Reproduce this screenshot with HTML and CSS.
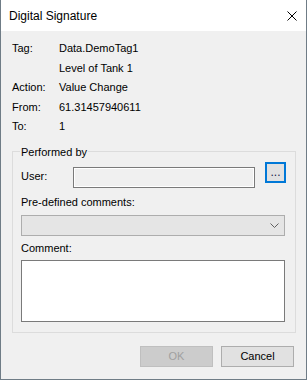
FILE: index.html
```html
<!DOCTYPE html>
<html lang="en">
<head>
  <meta charset="UTF-8">
  <title>Digital Signature</title>
  <link rel="stylesheet" href="styles.css">
</head>
<body>
  <div class="window">
    <div class="titlebar">
      <span class="title">Digital Signature</span>
      <svg class="close" width="10" height="10" viewBox="0 0 10 10">
        <path d="M0.5 0.5 L9.5 9.5 M9.5 0.5 L0.5 9.5" stroke="#000" stroke-width="1" fill="none"/>
      </svg>
    </div>

    <div class="content">
      <!-- Informações da tag -->
      <div class="info">
        <span>Tag:</span><span>Data.DemoTag1</span>
        <span></span><span>Level of Tank 1</span>
        <span>Action:</span><span>Value Change</span>
        <span>From:</span><span>61.31457940611</span>
        <span>To:</span><span>1</span>
      </div>

      <fieldset class="group">
        <legend>Performed by</legend>
        <div class="user-row">
          <label class="user-label">User:</label>
          <div class="textbox"></div>
          <button class="browse">...</button>
        </div>
        <div class="field-label">Pre-defined comments:</div>
        <div class="combo">
          <svg class="chevron" width="9" height="5" viewBox="0 0 9 5">
            <path d="M0.5 0.5 L4.5 4.5 L8.5 0.5" stroke="#606060" stroke-width="1" fill="none"/>
          </svg>
        </div>
        <div class="field-label comment-label">Comment:</div>
        <div class="memo"></div>
      </fieldset>

      <div class="buttons">
        <button class="btn" disabled>OK</button>
        <button class="btn">Cancel</button>
      </div>
    </div>
  </div>
</body>
</html>
```

FILE: styles.css
```css
* {
  box-sizing: border-box;
}

html, body {
  margin: 0;
  padding: 0;
}

body {
  width: 307px;
  height: 380px;
  overflow: hidden;
  font-family: "Liberation Sans", Arial, sans-serif;
  font-size: 11px;
  color: #000;
}

.window {
  height: 380px;
  display: flex;
  flex-direction: column;
  background-color: #f0f0f0;
  border: 1px solid #6f7c86;
  border-top: none;
}

.titlebar {
  height: 31px;
  flex: none;
  display: flex;
  align-items: center;
  justify-content: space-between;
  padding-left: 8px;
  background-color: #ffffff;
  font-size: 12px;
}

.close {
  margin-right: 9px;
  margin-top: 1px;
}

.content {
  padding: 8px 10px 0 11px;
}

.info {
  display: grid;
  grid-template-columns: 47px 1fr;
  line-height: 19.5px;
}

.group {
  margin: 7px 0 0 0;
  padding: 0 10px 10px 8px;
  border: 1px solid #dcdcdc;
  min-width: 0;
}

.group legend {
  margin-left: -1px;
  padding: 0 1px;
  line-height: 16px;
}

.user-row {
  display: flex;
  margin-top: 2px;
}

.user-label {
  flex: none;
  width: 52px;
  margin-top: 6px;
  line-height: 16px;
}

.textbox {
  flex: none;
  width: 182px;
  height: 21px;
  margin-top: 5px;
  border: 1px solid #7a7a7a;
  background-color: #f0f0f0;
  box-shadow: inset 0 0 0 1px #ffffff;
}

.browse {
  flex: none;
  width: 21px;
  height: 21px;
  margin-left: 10px;
  padding: 0;
  border: 2px solid #0078d7;
  background-color: #e1e1e1;
  font-family: inherit;
  font-size: 12px;
  line-height: 14px;
  color: #1a1a4a;
}

.field-label {
  margin-top: 6px;
  line-height: 16px;
}

.combo {
  height: 21px;
  margin-top: 5px;
  display: flex;
  align-items: center;
  justify-content: flex-end;
  padding-right: 5px;
  border: 1px solid #adadad;
  background-color: #e5e5e5;
}

.comment-label {
  margin-top: 4px;
}

.memo {
  height: 62px;
  margin-top: 4px;
  border: 1px solid #7a7a7a;
  background-color: #ffffff;
}

.buttons {
  display: flex;
  justify-content: flex-end;
  gap: 8px;
  margin-top: 13px;
  margin-right: 2px;
}

.btn {
  width: 73px;
  height: 21px;
  padding: 0;
  border: 1px solid #adadad;
  background-color: #e1e1e1;
  font-family: inherit;
  font-size: 11px;
  color: #000;
}

.btn:disabled {
  border-color: #bfbfbf;
  background-color: #cccccc;
  color: #a0a0a0;
}
```
